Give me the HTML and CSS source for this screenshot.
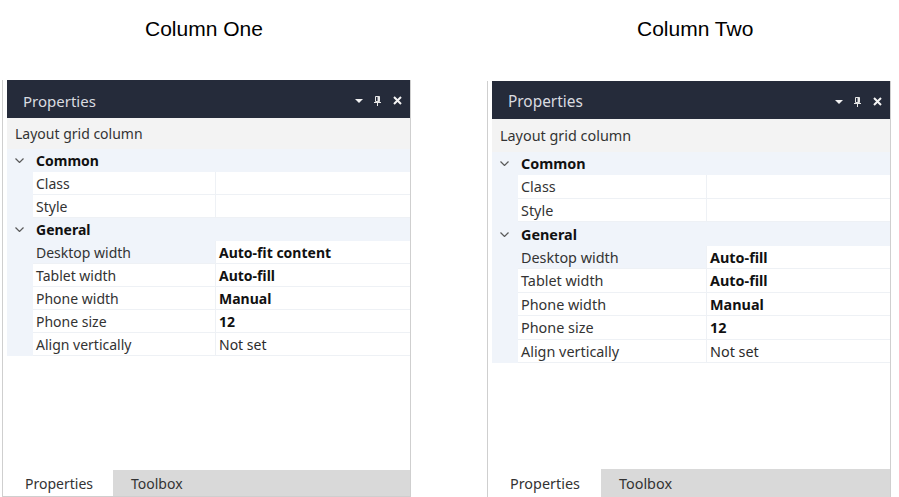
FILE: index.html
```html
<!DOCTYPE html>
<html lang="en">
<head>
<meta charset="utf-8">
<title>Layout grid column properties</title>
<link rel="stylesheet" href="styles.css">
</head>
<body>
<div class="page">
  <section class="col col-one">
    <h2 class="col-title">Column One</h2>
    <div class="panel">
      <div class="panel-head">
        <span class="panel-title">Properties</span>
        <span class="head-icons">
          <svg class="ico" width="8" height="4" viewBox="0 0 8 4"><path d="M0 0H8L4 4Z" fill="#f2f2f2"/></svg>
          <svg class="ico" width="8" height="10" viewBox="0 0 8 10"><path d="M1.5 0.5H5.5V5.5H1.5Z" fill="none" stroke="#e6e6e6"/><path d="M4.5 0.5V5.5" stroke="#e6e6e6" stroke-width="2"/><path d="M0 6.5H7" stroke="#e6e6e6"/><path d="M3.5 6.5V10" stroke="#e6e6e6"/></svg>
          <svg class="ico" width="9" height="9" viewBox="0 0 9 9"><path d="M1 1L8 8M8 1L1 8" stroke="#f5f5f5" stroke-width="2"/></svg>
        </span>
      </div>
      <div class="panel-sub">Layout grid column</div>
      <div class="grid">
        <div class="sec"><svg class="chev" width="9" height="5" viewBox="0 0 9 5"><path d="M0.5 0.5L4.5 4.5L8.5 0.5" fill="none" stroke="#5a5a5a" stroke-width="1.2"/></svg><span class="sec-name">Common</span></div>
        <div class="prop"><span class="gut"></span><span class="pname">Class</span><span class="pval"></span></div>
        <div class="prop"><span class="gut"></span><span class="pname">Style</span><span class="pval"></span></div>
        <div class="sec"><svg class="chev" width="9" height="5" viewBox="0 0 9 5"><path d="M0.5 0.5L4.5 4.5L8.5 0.5" fill="none" stroke="#5a5a5a" stroke-width="1.2"/></svg><span class="sec-name">General</span></div>
        <div class="prop sel"><span class="gut"></span><span class="pname">Desktop width</span><span class="pval strong">Auto-fit content</span></div>
        <div class="prop"><span class="gut"></span><span class="pname">Tablet width</span><span class="pval strong">Auto-fill</span></div>
        <div class="prop"><span class="gut"></span><span class="pname">Phone width</span><span class="pval strong">Manual</span></div>
        <div class="prop"><span class="gut"></span><span class="pname">Phone size</span><span class="pval strong">12</span></div>
        <div class="prop"><span class="gut"></span><span class="pname">Align vertically</span><span class="pval">Not set</span></div>
      </div>
      <div class="filler"></div>
      <div class="tabs"><span class="tab active">Properties</span><span class="tab">Toolbox</span></div>
    </div>
  </section>

  <section class="col col-two">
    <h2 class="col-title">Column Two</h2>
    <div class="panel">
      <div class="panel-head">
        <span class="panel-title">Properties</span>
        <span class="head-icons">
          <svg class="ico" width="8" height="4" viewBox="0 0 8 4"><path d="M0 0H8L4 4Z" fill="#f2f2f2"/></svg>
          <svg class="ico" width="8" height="10" viewBox="0 0 8 10"><path d="M1.5 0.5H5.5V5.5H1.5Z" fill="none" stroke="#e6e6e6"/><path d="M4.5 0.5V5.5" stroke="#e6e6e6" stroke-width="2"/><path d="M0 6.5H7" stroke="#e6e6e6"/><path d="M3.5 6.5V10" stroke="#e6e6e6"/></svg>
          <svg class="ico" width="9" height="9" viewBox="0 0 9 9"><path d="M1 1L8 8M8 1L1 8" stroke="#f5f5f5" stroke-width="2"/></svg>
        </span>
      </div>
      <div class="panel-sub">Layout grid column</div>
      <div class="grid">
        <div class="sec"><svg class="chev" width="9" height="5" viewBox="0 0 9 5"><path d="M0.5 0.5L4.5 4.5L8.5 0.5" fill="none" stroke="#5a5a5a" stroke-width="1.2"/></svg><span class="sec-name">Common</span></div>
        <div class="prop"><span class="gut"></span><span class="pname">Class</span><span class="pval"></span></div>
        <div class="prop"><span class="gut"></span><span class="pname">Style</span><span class="pval"></span></div>
        <div class="sec"><svg class="chev" width="9" height="5" viewBox="0 0 9 5"><path d="M0.5 0.5L4.5 4.5L8.5 0.5" fill="none" stroke="#5a5a5a" stroke-width="1.2"/></svg><span class="sec-name">General</span></div>
        <div class="prop sel"><span class="gut"></span><span class="pname">Desktop width</span><span class="pval strong">Auto-fill</span></div>
        <div class="prop"><span class="gut"></span><span class="pname">Tablet width</span><span class="pval strong">Auto-fill</span></div>
        <div class="prop"><span class="gut"></span><span class="pname">Phone width</span><span class="pval strong">Manual</span></div>
        <div class="prop"><span class="gut"></span><span class="pname">Phone size</span><span class="pval strong">12</span></div>
        <div class="prop"><span class="gut"></span><span class="pname">Align vertically</span><span class="pval">Not set</span></div>
      </div>
      <div class="filler"></div>
      <div class="tabs"><span class="tab active">Properties</span><span class="tab">Toolbox</span></div>
    </div>
  </section>
</div>
</body>
</html>
```

FILE: styles.css
```css
* { box-sizing: border-box; }

html, body {
  margin: 0;
  padding: 0;
  background: #ffffff;
}

body {
  width: 899px;
  height: 497px;
  overflow: hidden;
}

.page {
  display: flex;
  align-items: flex-start;
  gap: 76px;
  padding-left: 2px;
}

.col {
  display: flex;
  flex-direction: column;
}

.col-one {
  width: 409px;
  --title-pad: 143px;
  --title-gap: 39px;
  --panel-h: 417px;
  --head-h: 38px;
  --sub-h: 31px;
  --row-h: 23px;
  --gut-w: 26px;
  --name-w: 183px;
  --tabs-h: 26px;
  --tab-w: 106px;
  --fs: 14px;
}

.col-two {
  width: 404px;
  --title-pad: 150px;
  --title-gap: 40px;
  --panel-h: 417px;
  --head-h: 38px;
  --sub-h: 32.8px;
  --row-h: 23.5px;
  --gut-w: 26px;
  --name-w: 189px;
  --tabs-h: 28px;
  --tab-w: 109px;
  --fs: 14.4px;
}

.col-title {
  margin: 17px 0 var(--title-gap) 0;
  padding-left: var(--title-pad);
  font-family: "Liberation Sans", Arial, sans-serif;
  font-size: 21px;
  font-weight: normal;
  line-height: 24px;
  color: #000000;
}

.panel {
  height: var(--panel-h);
  display: flex;
  flex-direction: column;
  border: 1px solid #cfcfcf;
  border-top: none;
  padding-left: 4px;
  font-family: "Noto Sans", "Open Sans", sans-serif;
  font-size: var(--fs);
  color: #2b2b2b;
}

.panel-head {
  height: var(--head-h);
  flex: none;
  display: flex;
  align-items: center;
  justify-content: space-between;
  padding: 3px 8px 0 16px;
  background: #252b3a;
}

.panel-title {
  color: #dadce0;
  font-size: calc(var(--fs) + 1px);
}

.head-icons {
  display: flex;
  align-items: center;
  gap: 11px;
}

.ico { display: block; }

.panel-sub {
  height: var(--sub-h);
  flex: none;
  display: flex;
  align-items: center;
  padding-left: 8px;
  background: #f3f3f3;
  color: #333333;
}

.grid {
  flex: none;
  display: flex;
  flex-direction: column;
}

.sec {
  height: var(--row-h);
  display: flex;
  align-items: center;
  background: #f0f4fa;
  padding-left: 8px;
}

.chev { display: block; flex: none; }

.sec-name {
  margin-left: calc(var(--gut-w) - 14px);
  font-weight: bold;
  color: #111111;
}

.prop {
  height: var(--row-h);
  display: flex;
}

.gut {
  width: var(--gut-w);
  flex: none;
  background: #f0f4fa;
}

.pname, .pval {
  display: flex;
  align-items: center;
  padding-left: 3px;
  background: #ffffff;
  border-bottom: 1px solid #eef1f5;
}

.pname {
  width: var(--name-w);
  flex: none;
  border-right: 1px solid #eef1f5;
  color: #333333;
}

.pval {
  flex: 1;
  color: #2b2b2b;
}

.prop.sel .pname { background: #f0f4fa; }

.pval.strong {
  font-weight: bold;
  color: #111111;
}

.filler { flex: 1; }

.tabs {
  height: var(--tabs-h);
  flex: none;
  display: flex;
  background: #d9d9d9;
}

.tab {
  display: flex;
  align-items: center;
  padding-left: 18px;
  color: #333333;
}

.tab.active {
  width: var(--tab-w);
  background: #ffffff;
}
```
